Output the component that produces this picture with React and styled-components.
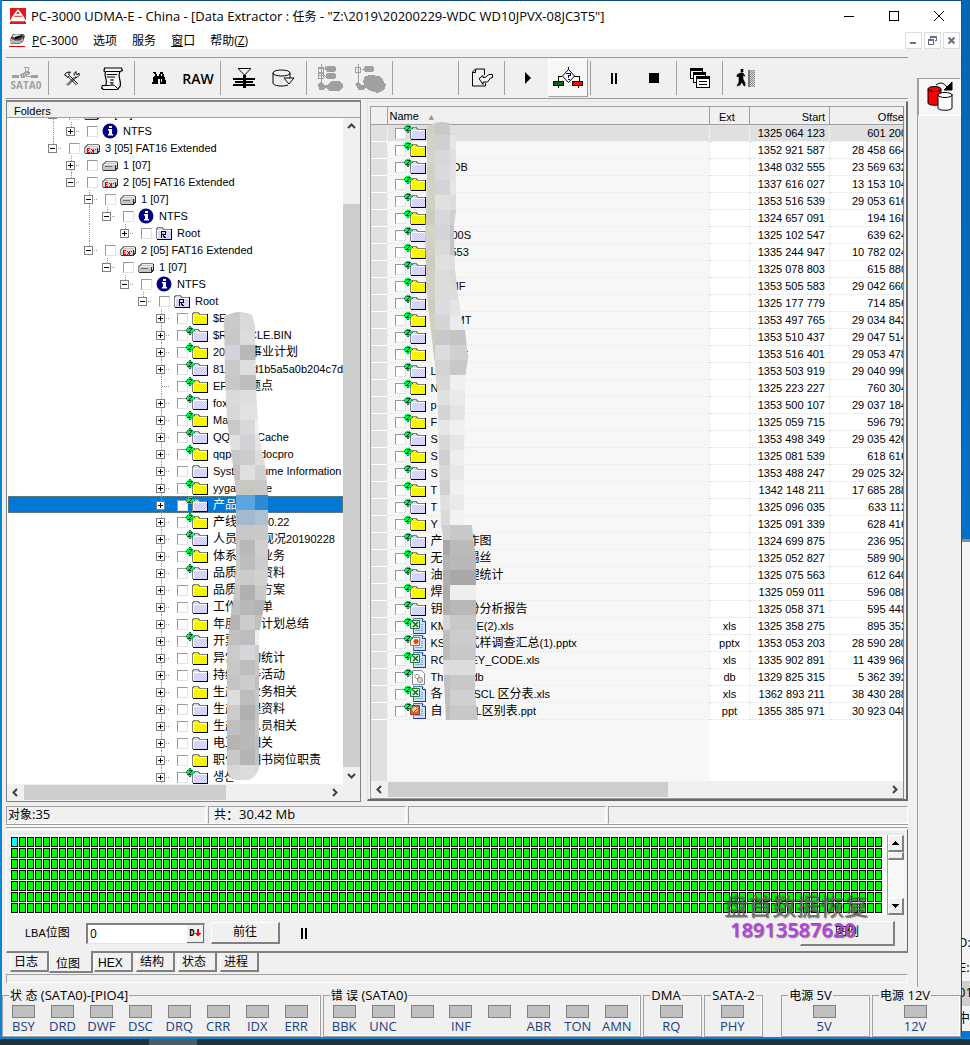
import React from "react";
import styled, { createGlobalStyle, css } from "styled-components";

const Global = createGlobalStyle`
  * { box-sizing: border-box; }
  html, body { margin: 0; padding: 0; height: 100%; overflow: hidden; }
  body { font-family: "Liberation Sans", "Noto Sans CJK SC", sans-serif; font-size: 11px; color: #000; background: #0078d7; }
  button, input { font: inherit; color: inherit; margin: 0; }
  button { padding: 0; border: 0; background: none; }
  svg { display: block; flex: none; }
`;
const ui = `font-family: "Open Sans", "Noto Sans CJK SC", sans-serif; font-size: 13px;`;

/* ---------- frame ---------- */
const Desktop = styled.div`position: relative; height: 100vh; display: flex; flex-direction: column; background: #0a84d2; overflow: hidden;`;
const Stage = styled.div`flex: 1; min-height: 0; display: flex; padding-left: 2px;`;
const Window = styled.main`flex: 1; min-width: 0; display: flex; flex-direction: column; background: #f0f0f0; border-top: 1px solid #0d4a7a; border-right: 1px solid #1b5a87;`;
const Behind = styled.aside`width: 8px; display: flex; flex-direction: column; background: linear-gradient(#0067b8, #0078d7); overflow: hidden; ${ui}`;
const BehindBlue = styled.div`flex: 541;`;
const BehindPane = styled.div`flex: 490; margin-bottom: 6px; background: #f3f3f3; border-top: 3px solid #8c8c8c; display: flex; flex-direction: column; justify-content: flex-end;`;
const BehindLine = styled.div`height: 25px; line-height: 22px; text-indent: ${p => p.$in || 0}px; white-space: nowrap; background: ${p => p.$on ? "#cfcfcf" : "transparent"};`;
const Taskbar = styled.footer`height: 6px; margin-top: 2px; background: #20343f; padding-left: 149px;`;
const TaskItem = styled.div`width: 48px; height: 6px; background: #4b5d66;`;

const TitleBar = styled.header`height: 30px; display: flex; align-items: center; background: #fff; padding-left: 8px; ${ui}`;
const Title = styled.h1`flex: 1; margin: 0 0 0 5px; font-size: 13px; font-weight: 400; white-space: nowrap;`;
const CaptionButton = styled.button`width: 45px; height: 28px; display: flex; align-items: center; justify-content: center;`;
const MenuBar = styled.nav`height: 18px; display: flex; align-items: center; background: #fff; padding: 0 1px 0 7px; ${ui} font-size: 12px;`;
const MenuItem = styled.button`margin-left: ${p => p.$first ? 7 : 15}px; padding-top: 1px; white-space: nowrap; line-height: 16px;`;
const MdiButtons = styled.div`margin-left: auto; display: flex; gap: 2px;`;
const MdiButton = styled.button`width: 17px; height: 17px; border: 1px solid #dcdcdc; display: flex; align-items: center; justify-content: center;`;

const Body = styled.div`flex: 1; min-height: 0; display: flex;`;
const Work = styled.div`flex: 1; min-width: 0; display: flex; flex-direction: column; padding: 8px 0 4px 4px;`;
const Rail = styled.div`width: 44px; margin: 29px 0 0 9px; border-left: 1px solid #a0a0a0;`;
const RailButton = styled.button`width: 100%; height: 38px; border: 1px solid #fff; border-left-color: #a0a0a0; border-top-color: #a0a0a0; background: #f7f7f7; display: flex; align-items: center; justify-content: center;`;

const Toolbar = styled.div`height: 42px; display: flex; align-items: center; border-top: 1px solid #999; border-bottom: 1px solid #999;`;
const ToolButton = styled.button`
  width: 40px; height: 38px; display: flex; flex-direction: column; align-items: center; justify-content: center;
  font: 600 14px "Open Sans", sans-serif;
  ${p => p.$pressed && css`background: #f7f7f7; border: 1px solid #fff; border-right-color: #a0a0a0; border-bottom-color: #a0a0a0;`}
`;
const Caption = styled.span`font: bold 10px/10px "Open Sans", sans-serif; color: #a0a0a0;`;
const Sep = styled.div`width: 1px; height: 34px; margin: 0 3px 0 2px; background: #a0a0a0;`;
const Blank = styled.div`width: 60px;`;

/* ---------- split view ---------- */
const Split = styled.div`flex: 1; min-height: 0; display: flex; margin-top: 1px; gap: 2px;`;
const FolderPane = styled.section`width: 355px; display: flex; flex-direction: column; border: 1px solid #828282; border-top-width: 2px;`;
const PaneHead = styled.h2`margin: 0; height: 16px; line-height: 18px; padding-left: 7px; font-size: 11px; font-weight: 400; border-bottom: 1px solid #a0a0a0;`;
const PaneRow = styled.div`flex: 1; min-height: 0; display: flex;`;
const TreeView = styled.div`position: relative; flex: 1; min-width: 0; overflow: hidden; background: #fff; padding-left: 1px;`;
const TreeList = styled.ul`list-style: none; margin: -13px 0 0; padding: 0;`;
const TreeRow = styled.li`
  height: 17px; display: flex; align-items: center; padding-left: 36px; white-space: nowrap;
  ${p => p.$sel && css`background: #0078d7; color: #fff; outline: 1px dotted #6f8a8c; outline-offset: -1px;`}
`;
const Guide = styled.span`width: 18px; height: 17px; flex: none;`;
const Check = styled.input`
  appearance: none; width: 11px; height: 11px; flex: none; margin: 1px 4px 0 7px; background: #fff;
  border: 1px solid #e3e3e3; border-top-color: #999; border-left-color: #999;
`;
const Label = styled.span`display: flex; align-items: center; margin-left: 5px; padding-top: ${p => p.$flat ? 0 : 1}px; line-height: ${p => p.$flat ? 15 : 16}px; white-space: pre;`;
const Lead = styled.span`flex: none; width: ${p => p.$w}px; overflow: hidden;`;
const Han = styled.span`font-size: 12px; line-height: 15px;`;
const Mosaic = styled.svg`position: absolute; left: ${p => p.$x}px; top: ${p => p.$y}px; pointer-events: none;`;

const Bar = styled.div`
  flex: none; display: flex; flex-direction: ${p => p.$v ? "column" : "row"}; background: #f0f0f0;
  ${p => p.$v ? "width: 17px;" : "height: 17px;"} ${p => p.$corner && "padding-right: 17px;"}
`;
const BarButton = styled.button`width: 17px; height: 17px; flex: none; display: flex; align-items: center; justify-content: center;`;
const Space = styled.div`flex: ${p => p.$f};`;
const Thumb = styled.div`flex: ${p => p.$f}; background: #cdcdcd; ${p => p.$v ? "" : "margin: 1px 0;"}`;

const ListFrame = styled.section`
  flex: 1; min-width: 0; margin: 1px 0 1px 4px; padding: 4px 2px 0 2px; display: flex; border: 1px solid #e3e3e3; border-right: 2px solid #696969; border-bottom: 2px solid #696969;
`;
const ListBox = styled.div`flex: 1; min-width: 0; display: flex; flex-direction: column; border: 1px solid #a0a0a0; border-right-color: #888; border-bottom-color: #999; background: #fff;`;
const ListView = styled.div`position: relative; flex: 1; min-height: 0; overflow: hidden; display: flex; flex-direction: column;`;
const Table = styled.table`width: calc(100% + 9px); flex: none; table-layout: fixed; border-collapse: collapse;`;
const Col = styled.col`width: ${p => p.$w ? p.$w + "px" : "auto"};`;
const Th = styled.th`height: 17px; padding: 2px 4px 0 ${p => p.$pad || 4}px; font-weight: 400; text-align: ${p => p.$align || "left"}; background: #f0f0f0; border-right: 1px solid #a0a0a0; border-bottom: 1px solid #a0a0a0; line-height: 14px; white-space: nowrap;`;
const SortMark = styled.span`margin-left: 8px; color: #999; font-size: 9px;`;
const Td = styled.td`
  height: 17px; line-height: 15px; padding: 0 4px; text-align: ${p => p.$align || "left"}; white-space: nowrap; overflow: hidden;
  background: ${p => p.$bg || "#fff"}; border-right: 1px dotted #e0e0e0; border-bottom: 1px dotted ${p => p.$mark ? "#fff" : "#e0e0e0"};
  ${p => p.$name && "padding: 0;"}
`;
const NameCell = styled.div`height: 16px; display: flex; align-items: center; overflow: visible;`;
const Filler = styled.div`flex: 1; display: flex;`;
const FillMark = styled.div`width: 16px; background: #e0e0e0;`;
const FillName = styled.div`flex: 1; margin-right: 193px; background: #f7f7f7;`;

/* ---------- status, map ---------- */
const StatusBar = styled.div`display: flex; gap: 2px; margin-top: 4px; ${ui}`;
const StatusCell = styled.div`height: 18px; line-height: 15px; padding-left: ${p => p.$pad}px; border: 1px solid #fff; border-top-color: #a0a0a0; border-left-color: #a0a0a0; ${p => p.$w ? `width: ${p.$w}px;` : "flex: 1;"}`;
const Groove = styled.div`height: 4px; margin-bottom: 1px; border-top: 1px solid #a0a0a0; border-bottom: 1px solid #a0a0a0; background: #f7f7f7;`;
const MapPanel = styled.section`height: 124px; padding: 3px 3px 0 3px; border: 1px solid #fff; border-right: 1px solid #696969; border-bottom: 2px solid #808080; display: flex; flex-direction: column;`;
const MapRow = styled.div`height: 82px; display: flex; border-top: 1px solid #e3e3e3; padding-top: 1px;`;
const MapView = styled.div`flex: 1; background: #fff; padding: 2px 0 0 1px; overflow: hidden;`;
const ClassicBar = styled.div`width: 17px; display: flex; flex-direction: column; background: #f8f8f8; border-left: 1px solid #a0a0a0;`;
const ClassicButton = styled.button`height: ${p => p.$h || 17}px; display: flex; align-items: center; justify-content: center; background: #f0f0f0; border: 1px solid #fff; border-right: 2px solid #808080; border-bottom: 2px solid #808080;`;
const Controls = styled.div`flex: 1; display: flex; align-items: center; padding: 0 9px 0 15px;`;
const FieldLabel = styled.label`width: 61px; white-space: nowrap;`;
const Field = styled.div`width: 119px; height: 21px; display: flex; background: #fff; border: 2px solid #808080; border-right: 1px solid #e3e3e3; border-bottom: 1px solid #e3e3e3;`;
const FieldInput = styled.input`flex: 1; min-width: 0; border: 0; padding: 0 2px; background: none; outline: 0; ${ui} font-size: 12px;`;
const RadixButton = styled.button`width: 17px; background: #f0f0f0; border-right: 1px solid #696969; border-bottom: 1px solid #696969; display: flex; align-items: center; justify-content: center; font: bold 9px "DejaVu Sans Mono", monospace;`;
const PushButton = styled.button`width: ${p => p.$w}px; height: ${p => p.$h}px; margin-left: ${p => p.$end ? "auto" : "6px"}; background: #f0f0f0; border: 1px solid #fff; border-right: 2px solid #808080; border-bottom: 2px solid #808080;`;
const PauseButton = styled.button`margin-left: 20px;`;
const Tabs = styled.div`height: 21px; margin-bottom: -1px; display: flex; gap: 3px; padding-left: 4px; align-items: flex-start;`;
const Tab = styled.button`
  position: relative; width: 39px; height: 19px; padding: 2px 0 0 3px; text-align: left; font-family: "Liberation Sans", "Noto Sans CJK SC", sans-serif; font-size: 12px; line-height: 14px;
  border-right: 2px solid #808080; border-bottom: 2px solid #808080; border-left: 1px solid #fff;
  ${p => p.$on && css`width: 44px; height: 22px; margin: -2px -2px 0 -3px; padding: 6px 0 0 6px; background: #f0f0f0; line-height: 12px;`}
`;
const Hint = styled.div`height: 9px; margin-top: 1px; border: 1px solid #fff; border-top-color: #a0a0a0; border-left-color: #a0a0a0;`;

/* ---------- lamps ---------- */
const Lamps = styled.div`display: flex; height: 50px; gap: 2px; ${ui}`;
const Group = styled.fieldset`flex: ${p => p.$f} 1 0; min-width: 0; margin: 0 0 0 ${p => p.$gap || 0}px; padding: 0; height: 50px; border: 1px solid #a0a0a0; box-shadow: inset -1px -1px 0 #fff;`;
const Legend = styled.legend`margin-left: 6px; padding: 0 1px; line-height: 17px; white-space: pre;`;
const LampRow = styled.div`display: flex; justify-content: space-around; padding: 0 4px 0 1px; margin-top: 1px;`;
const Lamp = styled.div`flex: 1; display: flex; flex-direction: column; align-items: center; color: #1b3f84; line-height: 15px; &::before { content: ""; width: 21px; height: 11px; margin-bottom: 1px; background: #c0c0c0; border: 1px solid #808080; }`;
const Watermark = styled.div`position: absolute; right: 100px; bottom: 105px; width: 146px; white-space: nowrap; pointer-events: none; font: 24px/30px "Noto Sans CJK SC", sans-serif; color: rgba(105,105,105,.9); text-shadow: 1px 1px 1px rgba(0,0,0,.5);`;
const WatermarkPhone = styled.div`font: 20px/20px "Open Sans", sans-serif; font-weight: 600; color: #b53fe8; padding-left: 6px;`;

/* ---------- text with Han runs ---------- */
const Mixed = ({ t }) => t.split(/([\u1100-\u11ff\u3000-\u9fff\uac00-\ud7af]+)/).map((s, i) => i % 2 ? <Han key={i}>{s}</Han> : s);

/* ---------- icons ---------- */
const Defs = () => (
  <svg width="0" height="0" style={{ position: "absolute" }} aria-hidden="true">
    <defs>
      <pattern id="dither" width="2" height="2" patternUnits="userSpaceOnUse">
        <path d="M0 0h2v2h-2z" fill="#ccccf4" /><path d="M0 0h1v1h-1zM1 1h1v1h-1z" fill="#ff0" />
      </pattern>
      <pattern id="gray" width="2" height="2" patternUnits="userSpaceOnUse">
        <path d="M0 0h2v2h-2z" fill="#888" /><path d="M0 0h1v1h-1zM1 1h1v1h-1z" fill="#ddd" />
      </pattern>
    </defs>
  </svg>
);
const Diamond = () => (
  <g transform="translate(-1 0)">
    <path d="M-2 -1h2v1h1v1h1v1h1v1h1v1h-1v1h-1v1h-1v1h-1v1h-2v-1h-1v-1h-1v-1h-1v-1h-1v-1h1v-1h1v-1h1v-1h1z" fill="#00ee58" />
    <path d="M-2 -.5h2M1 1.500h1M-4 1.500h1M-5 3.500h1M3 3.500h1M1 5.500h1M-4 5.500h1M-2 7.500h2" stroke="#074" fill="none" />
    <path d="M-2 1.500h3M0 2.500h1M-1 3.500h1M-2 4.500h1M-3 5.500h3" stroke="#003818" fill="none" />
  </g>
);
const Folder = ({ r, badge }) => (
  <svg width="16" height="16" viewBox="0 0 16 16" overflow="visible" shapeRendering="crispEdges">
    <path d="M1 4v-1h1v-1h5v1h1v1h7v10h-14z" fill="url(#dither)" />
    <path d="M.5 14V3.500h1v-1h5v1h1v1h7" fill="none" stroke="#808080" />
    <path d="M1.500 13V5.500h13" fill="none" stroke="#fff" />
    <path d="M1 14.500h14.500V4" fill="none" stroke="#000" />
    {r && <path d="M5.500 13V6.500h4v3h-4M7.500 10v1h1v1h1v1" fill="none" stroke="#000" />}
    {badge && <Diamond />}
  </svg>
);
const Drive = ({ ex }) => (
  <svg width="16" height="16" viewBox="0 0 16 16" shapeRendering="crispEdges">
    <path d="M0 8h1v-1h1v-1h1v-1h12v6h-1v1h-1v1h-13z" fill="#c6c6c6" />
    <path d="M1 7.500h12M13 7h1v-1h1M3 5.500h11" stroke="#efefef" fill="none" />
    <path d="M.5 13V7.500h1v-1h1v-1h1v-1h11" stroke="#808080" fill="none" />
    <path d="M1 13.500h13M13 12.500h2M14 11.500h2M15.500 5v6M13.500 8v5" stroke="#303030" fill="none" />
    {!ex && <path d="M3 9.500h7" stroke="#707070" />}
    {ex && <><path d="M1 8h12v5h-12z" fill="#d2d2d2" /><path d="M3 8.500h3M3.500 9v3M3 10.500h2M3 12.500h3M7 9.500h1M8 10.500h1v1h-1M9 9.500h1M7 12.500h1M9 12.500h1M11 9.500h1" stroke="#e80000" fill="none" /></>}
  </svg>
);
const Info = () => (
  <svg width="16" height="16" viewBox="0 0 16 16"><circle cx="8" cy="8" r="7.500" fill="#000084" /><path d="M7 3h3v2h-3zM6 6h4v5h1v1.500h-5v-1.500h1v-3.500h-1z" fill="#fff" /></svg>
);
const Doc = ({ kind }) => (
  <svg width="16" height="16" viewBox="0 0 16 16" overflow="visible">
    {kind === "db" ? (
      <><path d="M2.500 1.500h9l3 3v11h-12z" fill="#fff" stroke="#888" /><circle cx="7" cy="7.500" r="2.200" fill="none" stroke="#999" /><circle cx="10" cy="11" r="2.500" fill="#ddd" stroke="#888" /></>
    ) : (
      <>
        <path d="M3.500 .5h9l3 3v12h-12z" fill="#cfe0fb" stroke="#4a70b4" /><path d="M15.500 3v12.500h-12" stroke="#1d3e86" fill="none" /><path d="M12.500 .5v3h3" fill="#fff" stroke="#24427f" />
        <path d="M5 12.500h8M11 6.500h2M11 8.500h2M11 10.500h2" stroke="#86a8e0" />
        {kind === "xls" && <><path d="M.5 2.500h9v8h-9z" fill="#e4f2e4" stroke="#1e7a2e" /><path d="M3 4l5 5M8 4l-5 5" stroke="#1a6b28" strokeWidth="1.600" /></>}
        {kind === "pptx" && <><path d="M.5 2.500h9v8h-9z" fill="#fff0e8" stroke="#d86030" /><circle cx="6" cy="6.500" r="2.500" fill="#e04818" /></>}
        {kind === "ppt" && <><path d="M.5 2.500h9v9h-9z" fill="#d9672f" stroke="#993a10" /><circle cx="5" cy="6.500" r="2.600" fill="#f7cfae" /><path d="M3 10l4-4" stroke="#b23b08" /></>}
      </>
    )}
    <Diamond />
  </svg>
);
const Glyph = ({ w = 32, h = 32, children, smooth }) => (
  <svg width={w} height={h} viewBox={`0 0 ${w} ${h}`} shapeRendering={smooth ? "auto" : "crispEdges"} fill="none" stroke="#000">{children}</svg>
);
const Chevron = ({ d }) => <Glyph w={9} h={9} smooth><path d={{ up: "M1 6l3.500-3.500L8 6", down: "M1 3l3.500 3.500L8 3", left: "M6 1L2.500 4.500L6 8", right: "M3 1l3.500 3.500L3 8" }[d]} stroke="#404040" strokeWidth="2" /></Glyph>;

const I = {
  logo: <Glyph w={16} h={16}><path d="M0 0h16v16h-16z" fill="#e01a1a" stroke="none" /><path d="M8 2L4.500 6.500h7zM2.500 9.500l2-2.500h7l2 2.500zM0 13.500l2-2.500h12l2 2.500M2 12.500h12" fill="none" stroke="#fff" strokeWidth="1.300" shapeRendering="auto" /></Glyph>,
  disk: <Glyph w={16} h={16} smooth><path d="M1 7l3-5h10l2 2-2 6-4 2h-8z" fill="#444" stroke="none" /><ellipse cx="8.500" cy="4" rx="5" ry="1.800" fill="#e4e4e4" stroke="none" /><path d="M1 6l5 2.500h5l3-2.500v3l-4 2.500h-8z" fill="#b8b8b8" stroke="none" /><path d="M6 6l7-2" strokeWidth="2" /><path d="M0 14.500h16" stroke="#e00" /></Glyph>,
  sata: <Glyph w={28} h={14}><path d="M0 9h7v3h-7zM19 9h7v3h-7zM9 10h4v2h-4z" fill="#a0a0a0" stroke="none" /><path d="M8 9.500l8-4M10 11l8-4M13.500 1v7M16.500 2v5M12 1.500h5M19 10.500h-5" stroke="#a0a0a0" strokeWidth="1.500" /></Glyph>,
  tools: <Glyph w={16} h={15} smooth><path d="M2.500 14l8-8M4 14.500l8-8M12.500 14l-8-8M14 13l-8-8" strokeWidth=".9" /><path d="M.5 4l2-2.500 4-.5-2 2 1 1.500-2 2-1-1.500zM10.500 4.500l-.5-2 2-2v2.500l2 .5 1-1.500v2.500l-2 2-2-.5" /></Glyph>,
  script: <Glyph w={22} h={23} smooth><path d="M3.500 1h17l1 2.500-2.500 1c-3 5 2 10 0 15l-2.500 3h-14l-2-1.500 1-2.500h3c3-5-2-9 0-13.500l-1.500-1z" fill="#f7f7f7" strokeWidth="1.200" /><path d="M5 4.500h14M6 7.500h10M6 10h8M4.500 18.500h9l3 3" /><path d="M9.500 12h3v2h-3zM9 15h3.500v3h1v1h-5v-1h1v-2h-1z" fill="#555" stroke="none" /></Glyph>,
  find: <Glyph w={16} h={14}><path d="M3 1h3v2h1v2h2V3h1V1h3v2h1v3h1v3h1v4h-6V8h-2v5h-6V9h1V6h1V3z" fill="#000" stroke="none" /><path d="M2.500 8v3M11.500 8v3M4.500 3v2M11.500 3v2" stroke="#fff" /></Glyph>,
  squeeze: <Glyph w={22} h={22}><path d="M5 1.500h13" /><path d="M5.500 2l6 6 6-6" shapeRendering="auto" /><path d="M0 11h22v2h-22zM2 14h18v2h-18zM0 17h22v2h-22zM10 8h3v13h-3z" fill="#000" stroke="none" /></Glyph>,
  cylinder: <Glyph w={24} h={18} smooth><path d="M1 4v10c0 3 10 4 15 2M1 4c0-4 17-4 17 0s-17 4-17 0M18 4v5" /><path d="M12 9h10l-5 6z" fill="#f7f7f7" /></Glyph>,
  tree1: <Glyph w={27} h={28}><path d="M4.500 0v26M1 4.500h7v-3M1 11.500h7M8 5.500h3M8 12.500h3M1.500 3v5h5v-5zM1.500 9v5h5v-5z" stroke="#a0a0a0" /><path d="M9 3l2-1h6l2 1v4l-2 1h-6l-2-1zM9 10l2-1h6l2 1v4l-2 1h-6l-2-1zM1 20l3-2 3 3h3l4-4h8l4 3v4l-4 3h-9l-4-3-3 2h-4z" fill="#a0a0a0" stroke="none" /></Glyph>,
  tree2: <Glyph w={32} h={29}><path d="M4.500 0v26M8 5.500h3M1.500 3v5h5v-5z" stroke="#a0a0a0" /><path d="M10 3l2-1h6l2 1v4l-2 1h-6l-2-1zM1 20l3-2 3 3h3l-1-4 2-5 6-1 8 1 4 4 3 5-2 5-6 3-7-2-5-3-3 2h-4z" fill="#a0a0a0" stroke="none" /></Glyph>,
  export: <Glyph w={22} h={20} smooth><path d="M1.500 4l3-3h9v6M1.500 4v14h13v-3M1.500 4.500h3v-3" /><path d="M8 10.500l4-3v2h2l4-3h3.500v3l-2 .5-3 4h-4.500v2.500z" fill="#f7f7f7" /></Glyph>,
  play: <Glyph w={8} h={12} smooth><path d="M1 0v12l6-6z" fill="#000" stroke="none" /></Glyph>,
  flow: <Glyph w={30} h={22}><path d="M15.500 0v3M9 9.500h-4v5M21 9.500h5v5M5.500 18v3M25.500 18v3" /><path d="M15.500 2.500l6 6.500-6 6.500-6-6.500z" fill="#fff" shapeRendering="auto" /><path d="M13 6.500h4M17.500 6v3M15 8.500h2M15.500 9v2M15 12.500h2" stroke="#00008a" /><path d="M.5 14.500h10v4h-10z" fill="#0a6a0a" /><path d="M19.500 14.500h10v4h-10z" fill="#f00" /></Glyph>,
  pause: <Glyph w={8} h={12}><path d="M1 1h2v11h-2zM5 1h2v11h-2z" fill="#000" stroke="none" /></Glyph>,
  stop: <Glyph w={10} h={10}><path d="M0 0h10v10h-10z" fill="#000" stroke="none" /></Glyph>,
  windows: <Glyph w={20} h={20}><path d="M.5 .5h12v10h-12z" fill="#fff" /><path d="M0 1.500h13" strokeWidth="2" /><path d="M3.500 4.500h12v10h-12z" fill="#fff" /><path d="M3 5.500h13" strokeWidth="2" /><path d="M6.500 8.500h13v11h-13z" fill="#fff" /><path d="M6 9.500h14" strokeWidth="2" /><path d="M9 13.500h8M9 16.500h8" /></Glyph>,
  exit: <Glyph w={20} h={19}><path d="M5 0h2v3h-2zM4 4h3l2 3h-1l-1-1v4l2 4v3h-1l-2-4-2 3-3 1 2-4V7l-2 1v-2z" fill="#000" stroke="#000" strokeWidth=".6" shapeRendering="auto" /><path d="M12 1h7v17h-7z" fill="url(#gray)" stroke="none" /><path d="M12 1h2v17h-2z" fill="#777" stroke="none" /></Glyph>,
  copy: <Glyph w={28} h={32} smooth><path d="M2 8v14c0 3 13 3 13 0V8" fill="#f00" /><ellipse cx="8.500" cy="8" rx="6.500" ry="2.500" fill="#f00" /><path d="M12 13v14c0 3 14 3 14 0V13" fill="#fff" /><ellipse cx="19" cy="14" rx="7" ry="2.500" fill="#fff" /><path d="M10 4q6-5 11 2" /><path d="M26 1v8h-8z" fill="#000" /></Glyph>,
};

/* ---------- data ---------- */
const tree = [
  [0, "drive", "2 [07]", -1], [1, "info", "NTFS", 1], [0, "ex", "3 [05] FAT16 Extended", -1], [1, "drive", "1 [07]", 1],
  [1, "ex", "2 [05] FAT16 Extended", -1], [2, "drive", "1 [07]", -1], [3, "info", "NTFS", -1], [4, "root", "Root", 1],
  [2, "ex", "2 [05] FAT16 Extended", -1], [3, "drive", "1 [07]", -1], [4, "info", "NTFS", -1], [5, "root", "Root", -1],
  [6, "f", "$E", 1], [6, "z", "$R", 1, 36, "CLE.BIN"], [6, "z", "20", 1, 37, "事业计划"], [6, "z", "81", 1, 39, "d1b5a5a0b204c7d"],
  [6, "z", "EF", 0, 36, "题点"], [6, "z", "fox", 1], [6, "z", "Ma", 1], [6, "z", "QQ", 1, 44, "Cache"], [6, "z", "qqpc", 1, 47, "docpro"],
  [6, "f", "Syste", 1, 49, "ume Information"], [6, "z", "yygam", 1, 53, "e"], [6, "z", "产品", 1, 0, "", true], [6, "z", "产线", 1, 55, "0.22"],
  [6, "z", "人员", 1, 49, "现况20190228"], [6, "z", "体系", 1, 48, "业务"], [6, "z", "品质", 1, 48, "资料"], [6, "f", "品质", 1, 48, "方案"],
  [6, "f", "工作", 1, 48, "单"], [6, "f", "年度", 1, 48, "计划总结"], [6, "z", "开票", 1], [6, "f", "异常", 1, 36, "物统计"], [6, "f", "持续", 1, 36, "善活动"],
  [6, "f", "生产", 1, 36, "业务相关"], [6, "f", "生产", 1, 36, "理资料"], [6, "f", "生产", 1, 36, "人员相关"], [6, "f", "电工", 1, 36, "相关"],
  [6, "f", "职位", 1, 36, "明书岗位职责"], [6, "z", "생산", 1],
];
const files = [
  ["", "", 0, "", "1325 064 123", "601 200"], ["", "", 0, "", "1352 921 587", "28 458 664"], ["", "DB", 22, "", "1348 032 555", "23 569 632"],
  ["", "", 0, "", "1337 616 027", "13 153 104"], ["", "", 0, "", "1353 516 539", "29 053 616"], ["", "", 0, "", "1324 657 091", "194 168"],
  ["", "00S", 21, "", "1325 102 547", "639 624"], ["", "553", 20, "", "1335 244 947", "10 782 024"], ["", "", 0, "", "1325 078 803", "615 880"],
  ["", "MF", 19, "", "1353 505 583", "29 042 660"], ["", "", 0, "", "1325 177 779", "714 856"], ["", "MT", 25, "", "1353 497 765", "29 034 842"],
  ["", "", 0, "", "1353 510 437", "29 047 514"], ["", "C", 30, "", "1353 516 401", "29 053 478"], ["L", "", 9, "", "1353 503 919", "29 040 996"],
  ["N", "", 9, "", "1325 223 227", "760 304"], ["p", "", 9, "", "1353 500 107", "29 037 184"], ["F", "", 9, "", "1325 059 715", "596 792"],
  ["S", "", 9, "", "1353 498 349", "29 035 426"], ["S", "", 9, "", "1325 081 539", "618 616"], ["S", "", 9, "", "1353 488 247", "29 025 324"],
  ["T", "", 9, "", "1342 148 211", "17 685 288"], ["T", "", 9, "", "1325 096 035", "633 112"], ["Y", "", 9, "", "1325 091 339", "628 416"],
  ["产", "作图", 37, "", "1324 699 875", "236 952"], ["无", "锡丝", 37, "", "1325 052 827", "589 904"], ["油", "理统计", 37, "", "1325 075 563", "612 640"],
  ["焊", "", 37, "", "1325 059 011", "596 088"], ["钥", "份分析报告", 37, "", "1325 058 371", "595 448"],
  ["KM", "DE(2).xls", 38, "xls", "1325 358 275", "895 352"], ["KS", "式样调查汇总(1).pptx", 37, "pptx", "1353 053 203", "28 590 280"],
  ["RC", "EY_CODE.xls", 40, "xls", "1335 902 891", "11 439 968"], ["Th", "db", 41, "db", "1329 825 315", "5 362 392"],
  ["各", "SCL 区分表.xls", 43, "xls", "1362 893 211", "38 430 288"], ["自", "L区别表.ppt", 45, "ppt", "1355 385 971", "30 923 048"],
];
const treeTiles = `c9c9c9 d9d9d9 d9d9d9|c8c8c8 dcdcdc dcdcdc|d4d4d8 b8b8b8 b8b8b8|cacaca dddddd dddddd|c8c8c8 bdbdbd bdbdbd|dadada dedede dedede|d8d8d8 e2e2e2 e2e2e2|c9c9c9 d8d8d8 f0f0f0|e0e0e0 d2d2d6 e4e4e4|c8c8c8 cccccc dddddd|c0c0c0 dfdfdf d0d0d0|c8c8c8 c8c8c0 c8c8c8|5aa5e0 5aa5e0 2f8ad6|a5b9ce a5b9ce b0c0d4|c8c8c8 c8c8c8 c8c8c8|c8c8c8 b8b8b8 d0d0d0|cccccc bdbdbd cccccc|d0d0d0 cccccc d0d0d0|c8c8c8 b0b0b0 c8c8c8|c0c0c0 b8b8b8 b4b4b4|b4b4b4 cccccc c0c0c0|c0c0c0 bdbdbd eeeeee|cccccc d6d6da cccccc|c8c8c8 bdbdbd c8c8c8|c4c4c4 cccccc c0c0c0|dddddd bdbdbd c8c8c8|cccccc b0b0b0 c4c4c4|c0c0c0 b8b8b8 c8c8c8|b4b4b4 b8b8b8 c0c0c0|c8c8c8 b4b4b4 c4c4c4|d8d8d8 dcdcdc d8d8d8`;
const listTiles = `d0d0c4 c8c8c8 cfcfcf|d2d2c8 d0d0d0 e6e6e6|d4d4cc d8d8da e0e0e0|d0d0c4 dadadc e2e2e2|d2d2c8 d4d4d8 e6e6e6|d0d0c4 e0e0e0 dcdcdc|ccccc0 d8d8da cfcfcf|d4d4c4 d4d4d8 c4c4c4|d0d0c4 dadada c4c4c4|ccccc0 e0e0e0 dcdcdc|d0d0c4 dcdcdc d8d8d8|d0d0c4 dcdcdc dcdcdc|ccccc0 dcdce0 e4e4e4|d0d0c4 d4d4d4 eaeaf0|ccccc0 c8c8c8 c4c4c4|c8c8c0 dcdce0 d0d0d0|d0d0d0 d4d4d4 c8c8c8|dcdcdc d8d8d8 f0f0f0|e4e4e4 e0e0e0 eaeaea|dcdcdc d4d4d4 e4e4e4|e0e0e0 e6e6e6 f0f0f0|d8d8d8 d8d8d8 e6e6e6|dcdcdc cfcfcf eeeeee|e0e0e0 d8d8d8 e8e8e8|dadada d0d0d0 f0f0f0|dcdcdc e0e0e0 eaeaea|d8d8d8 dadada f2f2f2|cfcfcf cfcfcf c8c8c8|c0c0c0 a8a8a8 bababa|b8b8b8 b4b4b4 b8b8b8|a8a8a8 b0b0b0 a8a8a8|acacac acacac eeeeee|a4a4a4 b0b0b0 b8b8b8|c4c4c4 d6d6d6 c8c8c8|cccccc bebebe cccccc|d8d8d8 bcbcbc c8c8c8|dcdcdc dcdcdc dcdcdc|cccccc c0c0c0 c8c8c8|b8b8b8 bebebe d0d0d0|a8a8a8 bcbcbc c8c8c8`;

const Tiles = ({ id, data, x0, y0, w, h, left, top, xs, outline }) => (
  <Mosaic $x={left} $y={top} width={w} height={h} viewBox={`${x0} ${y0} ${w} ${h}`} aria-hidden="true">
    <clipPath id={id}><path d={outline} /></clipPath>
    <g clipPath={`url(#${id})`} shapeRendering="crispEdges">
      {data.split("|").map((r, j) => r.split(" ").map((c, i) => (
        <rect key={i + "-" + j} x={xs[i]} y={Math.ceil(y0 / 15) * 15 + j * 15 - (j ? 0 : 4)} width={xs[i + 1] - xs[i]} height={j ? 15 : 19} fill={"#" + c} />
      )))}
    </g>
  </Mosaic>
);

/* vertical guide l continues below row i when a later sibling exists */
const continues = (i, l) => {
  for (let k = i + 1; k < tree.length; k++) {
    if (tree[k][0] < l) return false;
    if (tree[k][0] === l) return true;
  }
  return l === 6;
};
const GuideCell = ({ own, down, exp }) => (
  <Guide>
    <svg width="18" height="17" shapeRendering="crispEdges">
      {(own || down) && <path d={`M9.500 0V${down ? 17 : 9}`} stroke="#999" strokeDasharray="1 1" />}
      {own && <path d="M10 9.500h8" stroke="#999" strokeDasharray="1 1" />}
      {own && exp !== 0 && <><path d="M4.500 5.500h8v8h-8z" fill="#fff" stroke="#808080" /><path d={exp > 0 ? "M6 9.500h5M8.500 7v5" : "M6 9.500h5"} stroke="#000" /></>}
    </svg>
  </Guide>
);
const treeIcon = { drive: <Drive />, ex: <Drive ex />, info: <Info />, root: <Folder r />, f: <Folder />, z: <Folder badge /> };

const ScrollBar = ({ v, corner, parts }) => (
  <Bar $v={v} $corner={corner}>
    <BarButton aria-label="Scroll back"><Chevron d={v ? "up" : "left"} /></BarButton>
    {parts[0] > 0 && <Space $f={parts[0]} />}<Thumb $v={v} $f={parts[1]} />{parts[2] > 0 && <Space $f={parts[2]} />}
    <BarButton aria-label="Scroll forward"><Chevron d={v ? "down" : "right"} /></BarButton>
  </Bar>
);

const MapCells = () => (
  <svg width="100%" height="78" shapeRendering="crispEdges" aria-hidden="true">
    <defs><pattern id="cell" width="8" height="11" patternUnits="userSpaceOnUse"><path d="M.5 .5h6v9h-6z" fill="#0f0" stroke="#000" /></pattern></defs>
    <rect width="872" height="77" fill="url(#cell)" /><path d="M1 1h5v8h-5z" fill="#0ff" />
  </svg>
);

const Tool = ({ name, icon, children, pressed }) => <ToolButton aria-label={name} title={name} $pressed={pressed}>{icon}{children}</ToolButton>;
const LampGroup = ({ title, names, f, gap }) => (
  <Group $f={f} $gap={gap}><Legend><Mixed t={title} /></Legend><LampRow>{names.map((n, i) => <Lamp key={i}>{n || "\u00a0"}</Lamp>)}</LampRow></Group>
);

export default function App() {
  return (
    <Desktop>
      <Global /><Defs />
      <Stage>
        <Window>
          <TitleBar>
            {I.logo}<Title><Mixed t={'PC-3000 UDMA-E - China - [Data Extractor : 任务 - "Z:\\2019\\20200229-WDC WD10JPVX-08JC3T5"]'} /></Title>
            <CaptionButton aria-label="Minimize"><Glyph w={10} h={10}><path d="M0 5.500h10" /></Glyph></CaptionButton>
            <CaptionButton aria-label="Maximize"><Glyph w={10} h={10}><path d="M.5 .5h9v9h-9z" /></Glyph></CaptionButton>
            <CaptionButton aria-label="Close"><Glyph w={10} h={10} smooth><path d="M0 0l10 10M10 0l-10 10" /></Glyph></CaptionButton>
          </TitleBar>
          <MenuBar>
            {I.disk}
            <MenuItem $first><u>P</u>C-3000</MenuItem><MenuItem>选项</MenuItem><MenuItem>服务</MenuItem><MenuItem><u>窗</u>口</MenuItem><MenuItem>帮助(<u>Z</u>)</MenuItem>
            <MdiButtons>
              <MdiButton aria-label="Minimize document"><Glyph w={9} h={9}><path d="M1 7h6" stroke="#6b7184" strokeWidth="2" /></Glyph></MdiButton>
              <MdiButton aria-label="Restore document"><Glyph w={9} h={9}><path d="M2.500 3V.5h6v4h-2M2 1.500h7M.5 3.500h5v5h-5zM0 4.500h6" stroke="#6b7184" /></Glyph></MdiButton>
              <MdiButton aria-label="Close document"><Glyph w={9} h={9} smooth><path d="M1.500 1.500l6 6M7.500 1.500l-6 6" stroke="#6b7184" strokeWidth="2" /></Glyph></MdiButton>
            </MdiButtons>
          </MenuBar>
          <Body>
            <Work>
              <Toolbar>
                <Tool name="Port" icon={I.sata}><Caption>SATA0</Caption></Tool><Sep />
                <Tool name="Settings" icon={I.tools} /><Tool name="Script" icon={I.script} /><Sep />
                <Tool name="Find" icon={I.find} /><Tool name="Raw recovery">RAW</Tool><Sep />
                <Tool name="Compress" icon={I.squeeze} /><Tool name="Save to disk" icon={I.cylinder} /><Sep />
                <Tool name="Expand tree" icon={I.tree1} /><Tool name="Map tree" icon={I.tree2} /><Sep />
                <Blank /><Sep />
                <Tool name="Export" icon={I.export} /><Sep />
                <Tool name="Start" icon={I.play} /><Tool name="Conditions" icon={I.flow} pressed /><Sep />
                <Tool name="Pause" icon={I.pause} /><Tool name="Stop" icon={I.stop} /><Sep />
                <Tool name="Windows" icon={I.windows} /><Sep /><Tool name="Exit" icon={I.exit} />
              </Toolbar>
              <Split>
                <FolderPane>
                  <PaneHead>Folders</PaneHead>
                  <PaneRow>
                    <TreeView>
                      <TreeList>
                        {tree.map(([lv, kind, text, exp, w, rest, sel], i) => (
                          <TreeRow key={i} $sel={sel}>
                            {Array.from({ length: lv + 1 }, (_, l) => <GuideCell key={l} own={l === lv} down={continues(i, l)} exp={exp} />)}
                            <Check type="checkbox" aria-label={text} />
                            {treeIcon[kind]}
                            <Label>{rest ? <><Lead $w={w}><Mixed t={text} /></Lead><span><Mixed t={rest} /></span></> : <span><Mixed t={text} /></span>}</Label>
                          </TreeRow>
                        ))}
                      </TreeList>
                      <Tiles id="treeClip" data={treeTiles} x0={220} y0={312} w={50} h={472} left={213} top={194} xs={[220, 240, 255, 270]}
                        outline="M224 317q14-9 28-2l3 10 1 60 1 20 2 30 4 20 3 15 2 25v80l-2 22-4 20-3 20v130q-3 14-17 14t-15-12V650l3-30 4-25 2-30v-70l-2-20-3-25-4-30-2-40z" />
                    </TreeView>
                    <ScrollBar v parts={[69, 565, 0]} />
                  </PaneRow>
                  <ScrollBar corner parts={[0, 202, 100]} />
                </FolderPane>
                <ListFrame>
                  <ListBox>
                    <ListView>
                      <Table>
                        <colgroup><Col $w={16} /><Col /><Col $w={40} /><Col $w={80} /><Col $w={82} /></colgroup>
                        <thead><tr><Th aria-label="Mark" /><Th $pad={2}>Name<SortMark>▲</SortMark></Th><Th $pad={9}>Ext</Th><Th $align="right">Start</Th><Th $align="right">Offset</Th></tr></thead>
                        <tbody>
                          {files.map(([a, b, w, ext, start, off], i) => {
                            const bg = i === 0 ? "#e0e0e0" : undefined;
                            return (
                              <tr key={i}>
                                <Td $bg="#e0e0e0" $mark /><Td $name $bg={bg || "#f7f7f7"}>
                                  <NameCell><Check type="checkbox" aria-label={`Item ${i + 1}`} />{ext ? <Doc kind={ext} /> : <Folder badge />}
                                    <Label $flat><Lead $w={w}><Mixed t={a} /></Lead><span><Mixed t={b} /></span></Label></NameCell></Td>
                                <Td $bg={bg} $align="center">{ext}</Td><Td $bg={bg} $align="right">{start}</Td><Td $bg={bg} $align="right">{off}</Td>
                              </tr>
                            );
                          })}
                        </tbody>
                      </Table>
                      <Filler><FillMark /><FillName /></Filler>
                      <Tiles id="listClip" data={listTiles} x0={420} y0={120} w={60} h={602} left={49} top={13} xs={[420, 435, 450, 480]}
                        outline="M427 127q10-7 22-4l1 10 6 4v74l-2 14v10l1 35 1 6 2 20 4 25 3 10 3 27-3 20v20l-1 60v67h8l2 20 2 10v80l-1 60 3 25h-32l-3-60v-125l-2-10-2-60-1-60-3-40-6-50-3-30-1-50 2-60z" />
                    </ListView>
                    <ScrollBar parts={[0, 281, 218]} />
                  </ListBox>
                </ListFrame>
              </Split>
              <StatusBar><StatusCell $w={200} $pad={1}><Mixed t="对象:35" /></StatusCell><StatusCell $w={198} $pad={5}><Mixed t="共：30.42 Mb" /></StatusCell><StatusCell $w={198} $pad={5} /><StatusCell $pad={5} /></StatusBar>
              <Groove />
              <MapPanel>
                <MapRow>
                  <MapView><MapCells /></MapView>
                  <ClassicBar>
                    <ClassicButton aria-label="Map up"><Glyph w={7} h={4}><path d="M0 4h7l-3.500-4z" fill="#000" stroke="none" /></Glyph></ClassicButton>
                    <ClassicButton as="div" $h={8} /><Space $f={1} />
                    <ClassicButton aria-label="Map down"><Glyph w={7} h={4}><path d="M0 0h7l-3.500 4z" fill="#000" stroke="none" /></Glyph></ClassicButton>
                  </ClassicBar>
                </MapRow>
                <Controls>
                  <FieldLabel htmlFor="lba"><Mixed t="LBA位图" /></FieldLabel>
                  <Field><FieldInput id="lba" defaultValue="0" /><RadixButton aria-label="Radix">D<Glyph w={6} h={8}><path d="M2 0h2v4h2l-3 4-3-4h2z" fill="#f00" stroke="none" /></Glyph></RadixButton></Field>
                  <PushButton $w={69} $h={22}><Mixed t="前往" /></PushButton>
                  <PauseButton aria-label="Pause map">{I.pause}</PauseButton>
                  <PushButton $w={95} $h={25} $end><Mixed t="图例" /></PushButton>
                </Controls>
              </MapPanel>
              <Tabs>{["日志", "位图", "HEX", "结构", "状态", "进程"].map(t => <Tab key={t} $on={t === "位图"}><Mixed t={t} /></Tab>)}</Tabs>
              <Hint />
            </Work>
            <Rail><RailButton aria-label="Copy disk">{I.copy}</RailButton></Rail>
          </Body>
          <Lamps>
            <LampGroup f={317} title="状 态 (SATA0)-[PIO4]" names={["BSY", "DRD", "DWF", "DSC", "DRQ", "CRR", "IDX", "ERR"]} />
            <LampGroup f={317} title="错 误 (SATA0)" names={["BBK", "UNC", "", "INF", "", "ABR", "TON", "AMN"]} />
            <LampGroup f={57} title="DMA" names={["RQ"]} />
            <LampGroup f={57} title="SATA-2" names={["PHY"]} />
            <LampGroup f={87} gap={16} title="电源 5V" names={["5V"]} />
            <LampGroup f={87} title="电源 12V" names={["12V"]} />
          </Lamps>
        </Window>
        <Behind>
          <BehindBlue />
          <BehindPane><BehindLine $in={-4}>D:</BehindLine><BehindLine $in={-3}>E:)</BehindLine><BehindLine $on $in={-4}>01</BehindLine><BehindLine $in={-5}>中</BehindLine></BehindPane>
        </Behind>
      </Stage>
      <Taskbar><TaskItem /></Taskbar>
      <Watermark>盘首数据恢复<WatermarkPhone>18913587620</WatermarkPhone></Watermark>
    </Desktop>
  );
}
